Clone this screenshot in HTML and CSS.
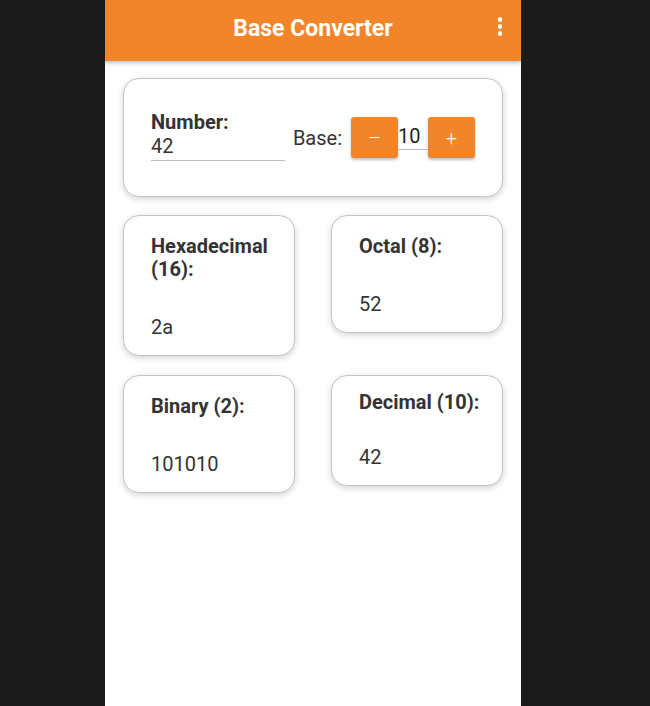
FILE: index.html
```html
<!DOCTYPE html>
<html lang="en">
<head>
<meta charset="utf-8">
<title>Base Converter</title>
<link rel="stylesheet" href="styles.css">
</head>
<body>
<div class="phone">
  <header class="appbar">
    <h1 class="title">Base Converter</h1>
    <div class="menu"><span></span><span></span><span></span></div>
  </header>
  <main class="content">
    <section class="card input-card">
      <div class="number-field">
        <label class="label">Number:</label>
        <div class="number-input">42</div>
      </div>
      <div class="base-field">
        <span class="base-label">Base:</span>
        <button class="btn">&ndash;</button>
        <div class="base-input">10</div>
        <button class="btn">+</button>
      </div>
    </section>
    <section class="grid">
      <div class="card result">
        <div class="result-title">Hexadecimal (16):</div>
        <div class="result-value">2a</div>
      </div>
      <div class="card result">
        <div class="result-title">Octal (8):</div>
        <div class="result-value">52</div>
      </div>
      <div class="card result">
        <div class="result-title">Binary (2):</div>
        <div class="result-value">101010</div>
      </div>
      <div class="card result result-compact">
        <div class="result-title">Decimal (10):</div>
        <div class="result-value">42</div>
      </div>
    </section>
  </main>
</div>
</body>
</html>
```
FILE: styles.css
```css
html, body {
  margin: 0;
  padding: 0;
  background: #1b1b1b;
  font-family: Roboto, "Liberation Sans", sans-serif;
  color: #333;
}
.phone {
  width: 416px;
  height: 706px;
  margin-left: 105px;
  background: #fff;
  overflow: hidden;
}
.appbar {
  height: 61px;
  background: #f2852a;
  display: flex;
  align-items: center;
  justify-content: center;
  position: relative;
  box-shadow: 0 2px 4px rgba(0,0,0,0.25);
}
.title {
  margin: 0 0 4px;
  color: #fff;
  font-size: 23px;
  font-weight: 700;
}
.menu {
  position: absolute;
  right: 19px;
  top: 17px;
  display: flex;
  flex-direction: column;
  gap: 2.5px;
}
.menu span {
  width: 4.5px;
  height: 4.5px;
  border-radius: 50%;
  background: #fff;
}
.content {
  padding: 17px 18px;
}
.card {
  background: #fff;
  border: 1px solid #c4c4c4;
  border-radius: 16px;
  box-shadow: 0 2px 6px rgba(0,0,0,0.18);
  box-sizing: border-box;
}
.input-card {
  height: 119px;
  display: flex;
  align-items: center;
  padding: 0 27px;
  margin-bottom: 18px;
}
.number-field {
  display: flex;
  flex-direction: column;
  width: 135px;
  margin-top: -4px;
}
.label {
  font-size: 20px;
  font-weight: 700;
  line-height: 24px;
}
.number-input {
  font-size: 20px;
  line-height: 23px;
  border-bottom: 1.5px solid #bdbdbd;
  padding-bottom: 2px;
  margin-top: 1px;
}
.base-field {
  display: flex;
  align-items: center;
  margin-left: 8px;
}
.base-label {
  font-size: 20px;
  margin-right: 9px;
  color: #333;
}
.btn {
  width: 47px;
  height: 41px;
  border: none;
  border-radius: 3px;
  background: #f2852a;
  color: #fff;
  font-family: Roboto, "Liberation Sans", sans-serif;
  font-size: 20px;
  font-weight: 300;
  box-shadow: 0 2px 3px rgba(0,0,0,0.25);
  padding: 0;
}
.base-input {
  width: 30px;
  font-size: 20px;
  line-height: 23px;
  border-bottom: 1px solid #bdbdbd;
  padding-bottom: 1px;
  color: #222;
}
.grid {
  display: grid;
  grid-template-columns: 172px 172px;
  column-gap: 36px;
  row-gap: 19px;
  align-items: start;
}
.result {
  padding: 19px 20px 16px 27px;
}
.result-title {
  font-size: 20px;
  font-weight: 700;
  line-height: 23px;
}
.result-value {
  font-size: 20px;
  line-height: 23px;
  margin-top: 35px;
}
.result-compact {
  padding-top: 15px;
}
.result-compact .result-value {
  margin-top: 32px;
}
```
